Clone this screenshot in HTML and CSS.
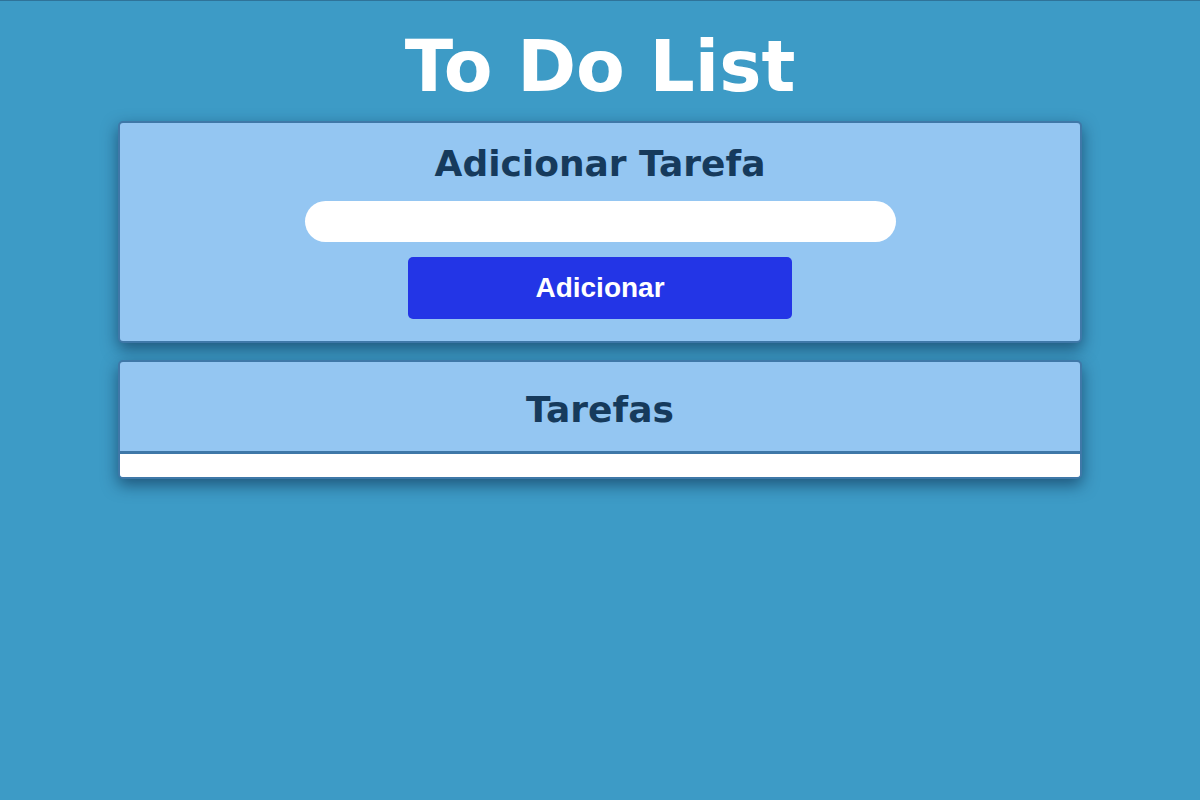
FILE: index.html
```html
<!DOCTYPE html>
<html lang="pt">
<head>
<meta charset="utf-8">
<title>To Do List</title>
<link rel="stylesheet" href="styles.css">
</head>
<body>
  <h1 class="title">To Do List</h1>
  <section class="card add-card">
    <h2 class="card-title">Adicionar Tarefa</h2>
    <input class="task-input" type="text">
    <button class="add-btn" type="button">Adicionar</button>
  </section>
  <section class="card list-card">
    <div class="list-header">
      <h2 class="card-title">Tarefas</h2>
    </div>
    <ul class="task-list"></ul>
  </section>
</body>
</html>
```

FILE: styles.css
```css
html, body {
  margin: 0;
  padding: 0;
}
body {
  background: #3d9bc6;
  border-top: 1px solid #2f7399;
  min-height: 799px;
  font-family: "DejaVu Sans", Verdana, sans-serif;
}
.title {
  margin: 25px 0 13px;
  text-align: center;
  color: #ffffff;
  font-size: 71px;
  font-weight: bold;
  line-height: 82px;
}
.card {
  width: 80%;
  margin: 0 auto;
  background: #94c6f2;
  border: 2px solid #3f78a8;
  border-radius: 5px;
  box-shadow: 0 6px 16px rgba(5, 30, 60, 0.55);
  box-sizing: content-box;
}
.add-card {
  display: flex;
  flex-direction: column;
  align-items: center;
  padding: 20px 0 22px;
}
.card-title {
  margin: 0;
  color: #163a5c;
  font-size: 36px;
  font-weight: bold;
  line-height: 41px;
  text-align: center;
}
.task-input {
  margin-top: 17px;
  width: 591px;
  height: 41px;
  box-sizing: border-box;
  border: none;
  border-radius: 21px;
  background: #ffffff;
  padding: 0 16px;
  font-size: 18px;
  outline: none;
}
.add-btn {
  margin-top: 15px;
  width: 384px;
  height: 62px;
  border: none;
  border-radius: 5px;
  background: #2335e6;
  color: #ffffff;
  font-family: "Liberation Sans", Arial, sans-serif;
  font-size: 28px;
  font-weight: bold;
  cursor: pointer;
}
.list-card {
  margin-top: 17px;
  overflow: hidden;
}
.list-header {
  padding: 27px 0 21px;
  border-bottom: 3px solid #3f78a8;
}
.task-list {
  margin: 0;
  padding: 0;
  list-style: none;
  min-height: 23px;
  background: #ffffff;
}
```
